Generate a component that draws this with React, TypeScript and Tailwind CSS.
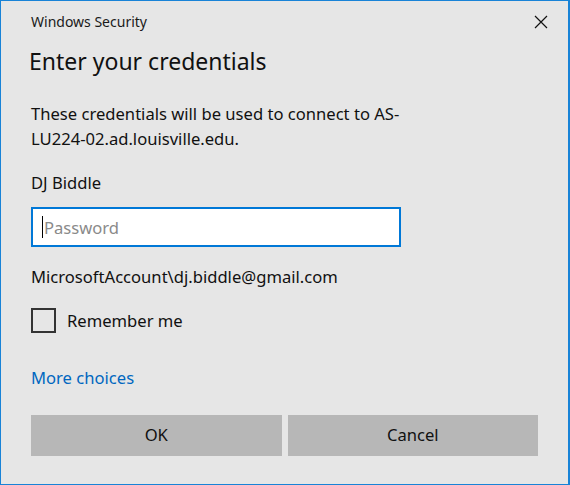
import React from "react";

function App() {
  return (
    <div
      className="h-[485px] w-[570px] border border-r-2 border-[#1883d7] bg-[#e6e6e6] text-[#000]"
      style={{ fontFamily: '"Noto Sans", "Open Sans", sans-serif' }}
    >
      <div className="relative flex h-[40px] items-center pl-[30px]">
        <span className="text-[14px] text-[#1a1a1a]">Windows Security</span>
        <button className="absolute right-[20px] top-[14px] flex h-[14px] w-[14px] items-center justify-center">
          <svg width="14" height="14" viewBox="0 0 14 14">
            <path d="M1 1 L13 13 M13 1 L1 13" stroke="#111" strokeWidth="1.2" fill="none" />
          </svg>
        </button>
      </div>
      <div className="pl-[28px] text-[23px] leading-[40px] text-[#111]">Enter your credentials</div>

      <div className="mt-[20px] px-[30px] text-[16.6px] leading-[25px] text-[#111]">
        <p>
          These credentials will be used to connect to AS-
          <br />
          LU224-02.ad.louisville.edu.
        </p>
        <p className="mt-[19px]">DJ Biddle</p>
        <div className="mt-[12px] flex h-[40px] w-[370px] items-center border-2 border-[#0078d7] bg-white pl-[9px]">
          <span className="mr-[1px] h-[22px] w-[1px] bg-black" />
          <span className="text-[#8a8a8a]">Password</span>
        </div>
        <p className="mt-[17px]">MicrosoftAccount\dj.biddle@gmail.com</p>
        <label className="mt-[19px] flex items-center">
          <span className="h-[25px] w-[25px] border-2 border-[#333]" />
          <span className="ml-[11px]">Remember me</span>
        </label>
        <p className="mt-[32px] text-[#0067c0]">More choices</p>
      </div>

      <div className="mt-[25px] flex gap-[6px] px-[30px]">
        <button className="h-[41px] w-[251px] bg-[#b7b7b7] text-[16.6px] text-[#111]">OK</button>
        <button className="h-[41px] w-[251px] bg-[#b7b7b7] text-[16.6px] text-[#111]">Cancel</button>
      </div>
    </div>
  );
}

export default App;
